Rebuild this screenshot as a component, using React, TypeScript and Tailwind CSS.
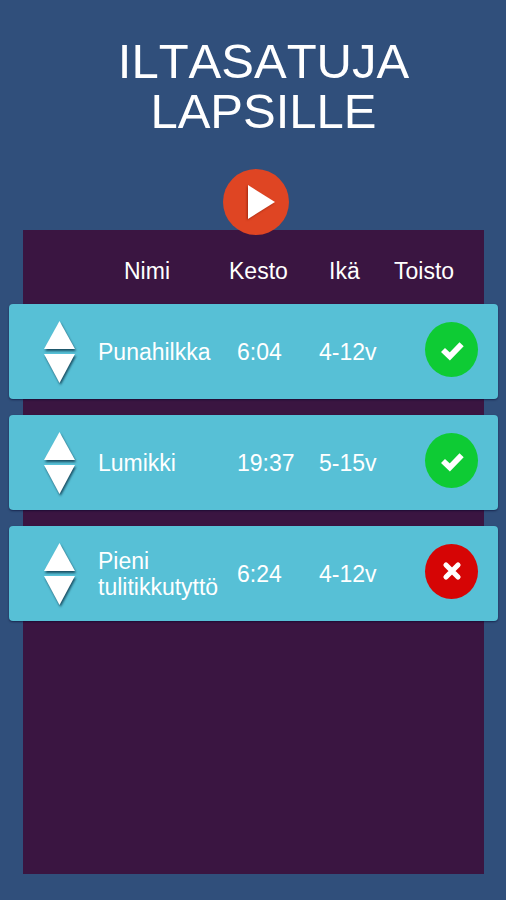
import { useState } from "react";

type Story = {
  id: number;
  name: string;
  duration: string;
  age: string;
  enabled: boolean;
};

const initialStories: Story[] = [
  { id: 1, name: "Punahilkka", duration: "6:04", age: "4-12v", enabled: true },
  { id: 2, name: "Lumikki", duration: "19:37", age: "5-15v", enabled: true },
  { id: 3, name: "Pieni tulitikkutyttö", duration: "6:24", age: "4-12v", enabled: false },
];

function CheckIcon() {
  return (
    <svg viewBox="0 0 24 24" className="h-6 w-6" fill="none" stroke="white" strokeWidth="5.8" aria-hidden="true">
      <path d="M3 12 9.8 18.4 21.6 6.2" />
    </svg>
  );
}

function CrossIcon() {
  return (
    <svg viewBox="0 0 24 24" className="h-6 w-6" fill="none" stroke="white" strokeWidth="5.2" strokeLinecap="round" aria-hidden="true">
      <path d="M6 5 18 17M18 5 6 17" />
    </svg>
  );
}

function MoveButton({ direction, label, onClick }: { direction: "up" | "down"; label: string; onClick: () => void }) {
  return (
    <button type="button" aria-label={label} onClick={onClick} className="block cursor-pointer">
      <svg viewBox="0 0 31 28" className="h-7 w-[31px] overflow-visible drop-shadow-[1px_2px_1px_rgba(0,30,50,0.7)]" aria-hidden="true">
        <path d={direction === "up" ? "M15.5 0 31 28H0Z" : "M0 0H31L15.5 29Z"} fill="white" />
      </svg>
    </button>
  );
}

export default function App() {
  const [stories, setStories] = useState(initialStories);

  const move = (index: number, step: number) => {
    const target = index + step;
    if (target < 0 || target >= stories.length) return;
    const next = [...stories];
    [next[index], next[target]] = [next[target], next[index]];
    setStories(next);
  };

  const toggle = (id: number) =>
    setStories(stories.map((s) => (s.id === id ? { ...s, enabled: !s.enabled } : s)));

  return (
    <main className="flex min-h-screen flex-col bg-[#304f7b] pt-9 pr-[22px] pb-[26px] pl-[23px] font-['Liberation_Sans',Arial,sans-serif] text-white">
      <h1 className="pl-5 text-center text-[49px] leading-[50px] [font-kerning:none]">ILTASATUJA LAPSILLE</h1>

      <button
        type="button"
        aria-label="Toista"
        className="z-10 mt-[33px] -mb-[5px] ml-1 flex h-[66px] w-[66px] cursor-pointer items-center justify-center self-center rounded-full bg-[#df4523] pl-3"
      >
        <svg viewBox="0 0 27 34" className="h-[34px] w-[27px] drop-shadow-[-1px_1px_1px_rgba(120,20,0,0.6)]" aria-hidden="true">
          <path d="M0 0 27 17 0 34Z" fill="white" />
        </svg>
      </button>

      <section className="flex-1 bg-[#3a1541]">
        <table className="-mx-[14px] block text-[23px] leading-[26px]">
          <thead className="block">
            <tr className="grid h-[74px] grid-cols-[115fr_105fr_100fr_65fr_104fr] items-center pt-2 text-left">
              <th aria-label="Järjestys" />
              <th className="font-normal">Nimi</th>
              <th className="font-normal">Kesto</th>
              <th className="font-normal">Ikä</th>
              <th className="font-normal">Toisto</th>
            </tr>
          </thead>
          <tbody className="flex flex-col gap-4">
            {stories.map((story, index) => (
              <tr
                key={story.id}
                className="grid h-[95px] grid-cols-[89fr_139fr_82fr_106fr_73fr] items-center rounded bg-[#57c0d6] shadow-[0_1px_2px_rgba(0,0,40,0.5)]"
              >
                <td className="flex flex-col gap-[5px] pl-[35px]">
                  <MoveButton direction="up" label={`Siirrä ylös: ${story.name}`} onClick={() => move(index, -1)} />
                  <MoveButton direction="down" label={`Siirrä alas: ${story.name}`} onClick={() => move(index, 1)} />
                </td>
                <td>{story.name}</td>
                <td>{story.duration}</td>
                <td>{story.age}</td>
                <td className="pb-1">
                  <button
                    type="button"
                    aria-label={`Toisto: ${story.name}`}
                    aria-pressed={story.enabled}
                    onClick={() => toggle(story.id)}
                    className={`flex h-[55px] w-[53px] cursor-pointer items-center justify-center rounded-[50%] ${
                      story.enabled ? "bg-[#0ecb34]" : "bg-[#d60505]"
                    }`}
                  >
                    {story.enabled ? <CheckIcon /> : <CrossIcon />}
                  </button>
                </td>
              </tr>
            ))}
          </tbody>
        </table>
      </section>
    </main>
  );
}
